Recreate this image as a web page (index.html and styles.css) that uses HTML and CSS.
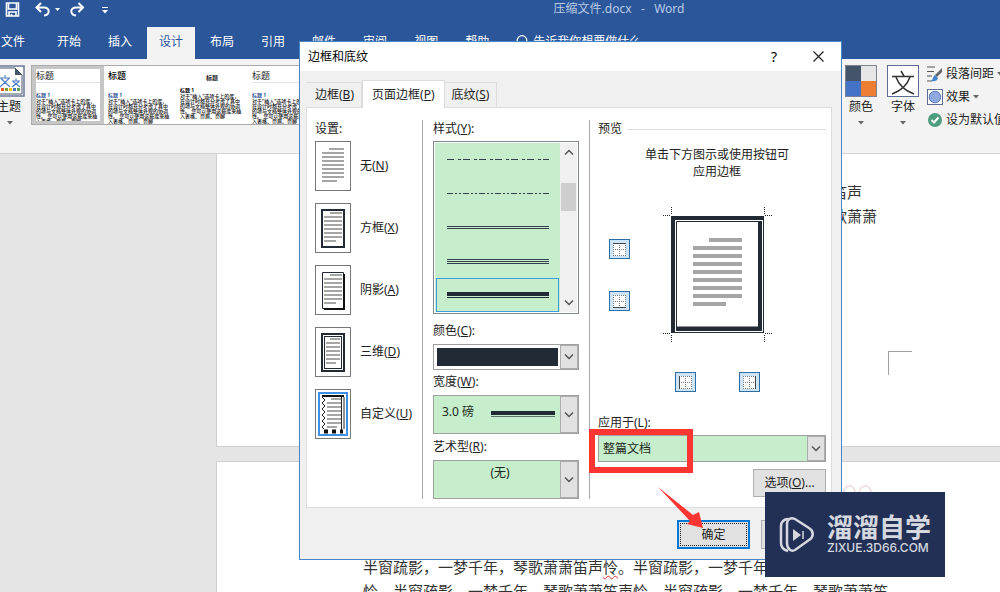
FILE: index.html
```html
<!DOCTYPE html>
<html lang="zh-CN">
<head>
<meta charset="utf-8">
<title>压缩文件.docx - Word</title>
<link rel="stylesheet" href="styles.css">
</head>
<body>
<svg class="defs" aria-hidden="true">
  <defs>
    <symbol id="chev" viewBox="0 0 10 8"><path d="M1 1.5L5 5.5L9 1.5" fill="none" stroke="#555" stroke-width="1.5"/></symbol>
    <symbol id="tri" viewBox="0 0 6 4"><path d="M0 0H6L3 3.5Z" fill="currentColor"/></symbol>
    <symbol id="grid" viewBox="0 0 13 13">
      <rect width="13" height="13" fill="#fff"/>
      <path d="M.5 0V13M6.500 0V13M12.500 0V13M0 .5H13M0 6.500H13M0 12.500H13" fill="none" stroke="#777" stroke-dasharray="1 1"/>
    </symbol>
    <symbol id="lines" viewBox="0 0 22 36">
      <path d="M7 1H22M0 5H22M0 9H22M0 13H22M0 17H22M0 21H22M0 25H22M0 29H22M0 33H15" stroke="#a6a6a6" stroke-width="2"/>
    </symbol>
  </defs>
</svg>
<div class="app">
  <header class="titlebar">
    <div class="quick">
      <button aria-label="保存"><svg width="15" height="15" viewBox="0 0 15 15"><path d="M1.500 1H13.500V14H1.500ZM3.500 1V7H11.500V1M4 14V10H11V14M6.500 14V12" fill="none" stroke="#fff" stroke-width="1.600"/></svg></button>
      <button aria-label="撤消"><svg width="26" height="15" viewBox="0 0 26 15"><path d="M6 1L1.500 5.500L6 10M2 5.500H9C15.500 5.500 15 13 9 13.500" fill="none" stroke="#fff" stroke-width="2"/><path d="M20 6H25L22.500 9Z" fill="#fff"/></svg></button>
      <button aria-label="恢复"><svg width="16" height="15" viewBox="0 0 16 15"><path d="M9.500 1L14 5.500L9.500 10M14 5.500H7C.5 5.500 1 13 7 13.500" fill="none" stroke="#fff" stroke-width="2"/></svg></button>
      <button class="more" aria-label="自定义快速访问工具栏"><svg width="6" height="7" viewBox="0 0 6 7"><path d="M0 .5H6" stroke="#fff"/><path d="M0 3H6L3 6.500Z" fill="#fff"/></svg></button>
    </div>
    <h1 class="doc-title">压缩文件.docx&nbsp;&nbsp; - &nbsp;&nbsp;Word</h1>
  </header>
  <nav class="tabs">
    <button class="tab file">文件</button>
    <button class="tab">开始</button>
    <button class="tab">插入</button>
    <button class="tab current">设计</button>
    <button class="tab">布局</button>
    <button class="tab">引用</button>
    <button class="tab">邮件</button>
    <button class="tab">审阅</button>
    <button class="tab">视图</button>
    <button class="tab">帮助</button>
    <button class="tab tell"><svg width="12" height="15" viewBox="0 0 12 15"><circle cx="6" cy="5.500" r="4.800" fill="none" stroke="#fff" stroke-width="1.300"/><path d="M4 11.500H8M4.500 14H7.500" stroke="#fff"/></svg>告诉我你想要做什么</button>
  </nav>
  <section class="ribbon">
    <button class="theme">
      <svg width="30" height="32" viewBox="0 0 30 32"><path d="M0 1H29V31H0" fill="#fff" stroke="#6b7a99" stroke-width="1.500"/><path d="M2 3H20L27 10V29H2" fill="#fff" stroke="#44546a"/><path d="M20 3V10H27Z" fill="#44546a"/><path d="M5 13H15M10 10V13M6 13.500L15 22M14 13.500L5 22M17 16H25M21 13.500V16M18 16.500L25 22M24 16.500L17 22" fill="none" stroke="#4a7cc4" stroke-width="1.100"/><path d="M6 24.500H9" stroke="#e05a2a" stroke-width="3"/><path d="M10 24.500H13" stroke="#7a9c3a" stroke-width="3"/><path d="M14 24.500H17" stroke="#f3c300" stroke-width="3"/><path d="M18 24.500H21" stroke="#4472c4" stroke-width="3"/><path d="M22 24.500H25" stroke="#5fa049" stroke-width="3"/></svg>
      <span>主题</span>
      <svg class="tri" width="6" height="4"><use href="#tri"/></svg>
    </button>
    <div class="gallery">
      <button class="style chosen"><b class="big rule">标题</b><b class="sub">标题 1</b><span class="tiny">对于"插入"选项卡上的库，在设计时都充分考虑了其中的项与文档整体外观的协调性。 您可以使用这些库来插入表格、页眉、页脚</span></button>
      <button class="style"><b class="big dark">标题</b><b class="sub">标题 1</b><span class="tiny">对于"插入"选项卡上的库，在设计时都充分考虑了其中的项与文档整体外观的协调性。 您可以使用这些库来插入表格、页眉、页脚</span></button>
      <button class="style"><b class="big small">标题</b><b class="sub black">标题 1</b><span class="tiny">对于"插入"选项卡上的库，在设计时都充分考虑了其中的项与文档整体外观的协调性。 您可以使用这些库来插入表格、页眉、页脚</span></button>
      <button class="style"><b class="big rule">标题</b><b class="sub">标题 1</b><span class="tiny">对于"插入"选项卡上的库，在设计时都充分考虑了其中的项与文档整体外观的协调性。 您可以使用这些库来插入表格、页眉、页脚</span></button>
    </div>
    <div class="format">
      <button class="large"><svg width="32" height="32" viewBox="0 0 32 32"><path d="M0 0H16V16H0Z" fill="#44546a"/><path d="M16 0H32V16H16Z" fill="#e7e6e6"/><path d="M0 16H16V32H0Z" fill="#4472c4"/><path d="M16 16H32V32H16Z" fill="#ed7d31"/><path d="M.5 .5H31.500V31.500H.5Z" fill="none" stroke="#7c8290"/></svg><span>颜色</span><svg class="tri" width="6" height="4"><use href="#tri"/></svg></button>
      <button class="large"><svg width="32" height="32" viewBox="0 0 32 32"><rect x=".5" y=".5" width="31" height="31" fill="#fff" stroke="#5b6d92"/><path d="M5 11.500H27M14 6L17 11M23 12C20 21 13 26 5 29M9 12C12 21 19 26 27 29" fill="none" stroke="#333" stroke-width="1.500"/></svg><span>字体</span><svg class="tri" width="6" height="4"><use href="#tri"/></svg></button>
      <div class="stack">
        <button><svg width="16" height="16" viewBox="0 0 16 16"><path d="M0 1H8M0 5.500H7M0 10H5M0 15H5" stroke="#555"/><path d="M15 2V6L10 11L8 9Z" fill="#666"/><path d="M8 9L11 12C10 15 8 15.500 4 15C6 14 6 10 8 9Z" fill="#3f84cc"/></svg>段落间距<svg class="tri" width="6" height="4"><use href="#tri"/></svg></button>
        <button><svg width="16" height="16" viewBox="0 0 16 16"><rect x=".5" y=".5" width="15" height="15" fill="#fff" stroke="#5b6d92"/><circle cx="8" cy="8" r="5.800" fill="#8ea9e0" stroke="#5b7cc4"/></svg>效果<svg class="tri" width="6" height="4"><use href="#tri"/></svg></button>
        <button><svg width="16" height="16" viewBox="0 0 16 16"><circle cx="8" cy="8" r="7" fill="#4d9d7f"/><path d="M4.500 8L7 10.500L11.500 5.500" fill="none" stroke="#fff" stroke-width="2"/></svg>设为默认值</button>
      </div>
    </div>
  </section>
  <main class="canvas">
    <article class="page first">
      <p class="indent">笛声</p>
      <p>歌萧萧</p>
      <div class="crop"></div>
    </article>
    <article class="page second">
      <p>半窗疏影，一梦千年，琴歌萧萧笛声<span class="typo">怜</span>。半窗疏影，一梦千年，</p>
      <p>怜。半窗疏影，一梦千年，琴歌萧萧笛声怜。半窗疏影，一梦千年，琴歌萧萧笛</p>
    </article>
  </main>
</div>

<div class="dialog" role="dialog" aria-labelledby="dlg-title">
  <header class="dlg-head">
    <h2 id="dlg-title">边框和底纹</h2>
    <button class="help" aria-label="帮助">?</button>
    <button aria-label="关闭"><svg width="11" height="11" viewBox="0 0 11 11"><path d="M.5 .5L10.500 10.500M10.500 .5L.5 10.500" stroke="#222" stroke-width="1.200"/></svg></button>
  </header>
  <div class="dlg-tabs">
    <button>边框(<u>B</u>)</button>
    <button class="active">页面边框(<u>P</u>)</button>
    <button>底纹(<u>S</u>)</button>
  </div>
  <div class="panel">
    <section class="settings">
      <h3>设置:</h3>
      <button><svg width="36" height="50" viewBox="0 0 36 50"><rect x=".5" y=".5" width="35" height="49" fill="#fff" stroke="#777"/><use href="#lines" x="7" y="7" width="22" height="36"/></svg><span>无(<u>N</u>)</span></button>
      <button><svg width="36" height="50" viewBox="0 0 36 50"><rect x=".5" y=".5" width="35" height="49" fill="#fff" stroke="#777"/><rect x="7" y="7" width="22" height="37" fill="none" stroke="#222a35" stroke-width="2"/><path d="M15 10H27M9 14H27M9 18H27M9 22H27M9 26H27M9 30H27M9 34H27M9 38H21" stroke="#a6a6a6" stroke-width="2"/></svg><span>方框(<u>X</u>)</span></button>
      <button><svg width="36" height="50" viewBox="0 0 36 50"><rect x=".5" y=".5" width="35" height="49" fill="#fff" stroke="#777"/><path d="M7.500 7.500H28.500V43.500H7.500Z" fill="none" stroke="#222a35"/><path d="M29 9V44H9" fill="none" stroke="#111" stroke-width="2"/><path d="M15 10H27M9 14H27M9 18H27M9 22H27M9 26H27M9 30H27M9 34H27M9 38H21" stroke="#a6a6a6" stroke-width="2"/></svg><span>阴影(<u>A</u>)</span></button>
      <button><svg width="36" height="50" viewBox="0 0 36 50"><rect x=".5" y=".5" width="35" height="49" fill="#fff" stroke="#777"/><rect x="7" y="7" width="22" height="37" fill="none" stroke="#222a35" stroke-width="2"/><rect x="9.500" y="9.500" width="17" height="32" fill="none" stroke="#222a35"/><path d="M15 12H25M11 16H25M11 20H25M11 24H25M11 28H25M11 32H25M11 36H21" stroke="#a6a6a6" stroke-width="2"/></svg><span>三维(<u>D</u>)</span></button>
      <button aria-pressed="true"><svg width="36" height="50" viewBox="0 0 36 50"><rect x=".5" y=".5" width="35" height="49" fill="#fff" stroke="#777"/><rect x="4" y="4" width="28" height="42" fill="none" stroke="#3f8fe6" stroke-width="2"/><path d="M7 7H29" stroke="#111" stroke-width="2"/><path d="M26.500 8V41M29 8V40" stroke="#222" /><path d="M7 8L10 11L7 14L10 17L7 20L10 23L7 26L10 29L7 32L10 35L7 38L9 40" fill="none" stroke="#222"/><path d="M9 42.500H13M17 42.500H21M25 42.500H28" stroke="#111" stroke-width="4"/><path d="M16 10H26M12 14H26M12 18H26M12 22H26M12 26H26M12 30H26M12 34H26M12 38H22" stroke="#a6a6a6" stroke-width="2"/></svg><span>自定义(<u>U</u>)</span></button>
    </section>
    <section class="line">
      <h3>样式(<u>Y</u>):</h3>
      <div class="list">
        <div class="options" role="listbox" aria-label="样式">
          <div role="option"><svg width="102" height="7"><path d="M0 3.500H102" stroke="#333f4c" stroke-dasharray="7 4 3 2"/></svg></div>
          <div role="option"><svg width="102" height="7"><path d="M0 3.500H102" stroke="#333f4c" stroke-dasharray="6 2 2 2 2 2"/></svg></div>
          <div role="option"><svg width="102" height="7"><path d="M0 2.500H102M0 4.500H102" stroke="#333f4c"/></svg></div>
          <div role="option"><svg width="102" height="7"><path d="M0 1.500H102M0 3.500H102M0 5.500H102" stroke="#333f4c"/></svg></div>
          <div role="option" aria-selected="true"><svg width="102" height="7"><path d="M0 2H102" stroke="#222a35" stroke-width="4"/><path d="M0 5.500H102" stroke="#222a35"/></svg></div>
        </div>
        <div class="scroll">
          <button aria-label="向上"><svg class="up" width="10" height="8"><use href="#chev"/></svg></button>
          <div class="thumb"></div>
          <button aria-label="向下"><svg width="10" height="8"><use href="#chev"/></svg></button>
        </div>
      </div>
      <label for="color">颜色(<u>C</u>):</label>
      <div class="combo white"><select id="color" aria-label="颜色"><option></option></select><div class="swatch"></div><span class="arrow"><svg width="10" height="8"><use href="#chev"/></svg></span></div>
      <label for="width">宽度(<u>W</u>):</label>
      <div class="combo tall"><select id="width"><option>3.0 磅</option></select><svg class="sample" width="64" height="7"><path d="M0 2H64" stroke="#222a35" stroke-width="4"/><path d="M0 5.500H64" stroke="#5c7465"/></svg><span class="arrow"><svg width="10" height="8"><use href="#chev"/></svg></span></div>
      <label for="art">艺术型(<u>R</u>):</label>
      <div class="combo tall art"><select id="art"><option>(无)</option></select><span class="arrow"><svg width="10" height="8"><use href="#chev"/></svg></span></div>
    </section>
    <section class="preview">
      <h3 class="legend">预览</h3>
      <p>单击下方图示或使用按钮可<br>应用边框</p>
      <div class="stage">
        <div class="side">
          <button aria-label="上边框"><svg width="13" height="13" viewBox="0 0 13 13"><use href="#grid"/><path d="M0 .5H13" stroke="#444"/></svg></button>
          <button aria-label="下边框"><svg width="13" height="13" viewBox="0 0 13 13"><use href="#grid"/><path d="M0 12.500H13" stroke="#444"/></svg></button>
        </div>
        <svg width="110" height="136" viewBox="0 0 110 136">
          <path d="M0 8.500H8M8.500 0V8M102 8.500H110M101.500 0V8M0 126.500H8M8.500 128V136M102 126.500H110M101.500 128V136" stroke="#222" stroke-dasharray="1 1"/>
          <path d="M8 9H101V126H8Z" fill="#222a35"/>
          <path d="M12 13H100V125H12Z" fill="#fff"/>
          <path d="M13.500 14.500H98.500V123.500H13.500Z" fill="#fff" stroke="#222a35"/>
          <path d="M97 14V122M13 121.500H99" stroke="#222a35" stroke-width="4" fill="none"/>
          <path d="M46 33H79M30 41H79M30 49H79M30 57H79M30 65H79M30 73H79M30 81H79M30 89H79M30 97H63" stroke="#a6a6a6" stroke-width="4"/>
        </svg>
      </div>
      <div class="below">
        <button aria-label="左边框"><svg width="13" height="13" viewBox="0 0 13 13"><use href="#grid"/><path d="M.5 0V13" stroke="#444"/></svg></button>
        <button aria-label="右边框"><svg width="13" height="13" viewBox="0 0 13 13"><use href="#grid"/><path d="M12.500 0V13" stroke="#444"/></svg></button>
      </div>
      <label for="apply">应用于(L):</label>
      <div class="combo apply"><select id="apply"><option>整篇文档</option></select><span class="arrow"><svg width="10" height="8"><use href="#chev"/></svg></span></div>
      <button class="push more-options">选项(<u>O</u>)...</button>
    </section>
  </div>
  <footer class="dlg-foot">
    <button class="push ok"><span>确定</span></button>
    <button class="push" aria-label="取消"></button>
  </footer>
  <div class="highlight"></div>
  <svg class="pointer" width="46" height="42" viewBox="0 0 46 42"><path d="M0 0L35 28L41 25L45 41L29 37L32 34Z" fill="#fb3532"/></svg>
</div>

<svg class="rings" width="32" height="14" viewBox="0 0 32 14"><path d="M2 14C0 -1 12 -1 13 8M17 14C16 -1 28 -1 29 8" fill="none" stroke="#f0e2e4" stroke-width="2"/></svg>
<aside class="brand">
  <svg width="36" height="38" viewBox="0 0 36 38"><path d="M9 3C5 3 2 6 2 10V27C2 31 5 34 9 35" fill="none" stroke="#d5d8df" stroke-width="2.500"/><path d="M8 27V8C8 3 12 1 16 3L30 12C35 15 35 21 30 24L16 34C12 36 8 33 8 27Z" fill="none" stroke="#d5d8df" stroke-width="2.500"/><path d="M14 13V25L22 19Z" fill="#d5d8df"/><path d="M24 15V23" stroke="#d5d8df" stroke-width="1.500"/></svg>
  <div><strong>溜溜自学</strong><span>ZIXUE.3D66.COM</span></div>
</aside>
</body>
</html>
```
FILE: styles.css
```css
* { box-sizing: border-box; }
body, h1, h2, h3, p { margin: 0; }
body {
  height: 100vh;
  overflow: hidden;
  font: 12px/18px "Noto Sans", "Noto Sans CJK SC", sans-serif;
  color: #222;
}
h1, h2, h3 { font: inherit; }
button, select { font: inherit; color: inherit; border: 0; padding: 0; margin: 0; background: none; border-radius: 0; }
button { white-space: nowrap; }
svg { display: block; flex: none; }
.defs { position: absolute; width: 0; height: 0; }

.app { display: flex; flex-direction: column; height: 100vh; overflow: hidden; background: #e5e5e5; }
.titlebar { display: flex; flex: none; height: 27px; background: #2b579a; }
.quick { display: flex; align-items: flex-start; gap: 12px; padding: 2px 0 0 5px; }
.quick button { display: flex; }
.quick .more { padding: 5px 0 0 5px; }
.quick button:first-child { margin-right: 3px; }
.quick button:nth-child(2) { margin-right: -4px; }
.doc-title { flex: 1; color: #b9cbe6; text-align: center; padding-left: 130px; }

.tabs { display: flex; flex: none; gap: 3px; height: 32px; background: #2b579a; }
.tab { padding: 0 12px 2px; color: #fff; }
.tab.file { padding: 0 17px 2px 1px; }
.tab.current { background: #f3f3f3; color: #2b579a; }
.tab.tell { display: flex; align-items: center; gap: 5px; }

.ribbon { display: flex; flex: none; height: 95px; padding-top: 6px; background: #f3f3f3; border-bottom: 1px solid #d2d2d2; overflow: hidden; }
.theme { display: flex; flex-direction: column; align-items: flex-end; width: 25px; margin-right: 6px; overflow: hidden; align-self: flex-start; }
.theme span { padding: 1px 4px 0 0; }
.theme .tri { margin: 5px 12px 0 0; }
.tri { color: #666; }
.gallery { display: flex; flex: 1; min-width: 0; height: 60px; background: #fff; border: 1px solid #ababab; overflow: hidden; }
.style { display: flex; flex-direction: column; flex: none; width: 72px; height: 58px; padding: 3px 4px 2px; border: 0 solid #c6c6c6; text-align: left; overflow: hidden; }
.style.chosen { padding: 0; border-width: 3px 4px; }
.big { width: 100%; height: 14px; font-size: 9px; line-height: 14px; font-weight: 400; }
.style .rule { border-bottom: 1px solid #dce3ee; }
.big.dark { font-weight: 500; color: #000; }
.big.small { height: 16px; font-size: 6px; line-height: 18px; font-weight: 700; text-align: center; }
.sub { padding-top: 8px; font-size: 5px; line-height: 8px; color: #2f5496; }
.sub.black { padding-top: 1px; color: #000; }
.tiny { font-size: 5px; line-height: 5px; font-weight: 500; color: #111; white-space: normal; }

.format { display: flex; gap: 10px; flex: 0 0 159px; padding-left: 4px; overflow: hidden; }
.large { display: flex; flex-direction: column; align-items: center; width: 32px; align-self: flex-start; }
.large span { padding-top: 1px; }
.large .tri { margin-top: 5px; }
.stack { display: flex; flex-direction: column; margin: -3px 0 0 -2px; }
.stack button { display: flex; align-items: center; gap: 3px; height: 23px; }

.canvas { display: flex; flex-direction: column; flex: 1; gap: 14px; min-height: 0; padding-left: 216px; font-size: 15px; line-height: 24px; color: #333; }
.page { background: #fff; border: 1px solid #cfcfcf; border-right: 0; overflow: hidden; white-space: nowrap; }
.first { display: flex; flex-direction: column; align-items: flex-end; flex: 0 0 293px; border-top: 0; padding: 26px 123px 0 0; }
.first .indent { padding-right: 15px; }
.second { flex: 1; border-bottom: 0; padding: 93px 0 0 146px; }
.typo { text-decoration: underline wavy #e03030 1px; text-underline-offset: 2px; }
.crop { width: 24px; height: 24px; margin: 123px -35px 0 0; border: solid #a0a0a0; border-width: 1px 0 0 1px; }

.dialog { position: absolute; left: 299px; top: 41px; width: 543px; display: flex; flex-direction: column; background: #f0f0f0; border: 1px solid #4a86c5; }
.dlg-head { display: flex; align-items: center; height: 29px; padding: 0 17px 0 8px; background: #fff; color: #000; }
.dlg-head h2 { flex: 1; }
.dlg-head .help { margin-right: 36px; font-size: 14px; }
.dlg-tabs { display: flex; align-items: flex-end; height: 37px; padding: 0 7px; margin-bottom: -1px; }
.dlg-tabs button { height: 26px; padding: 0 7px 0 8px; border: 1px solid #dcdcdc; border-width: 1px 1px 1px 0; }
.dlg-tabs .active { height: 28px; padding: 0 9px; background: #fff; border-width: 1px 1px 0; position: relative; }
.dlg-tabs button:last-child { padding: 0 7px; }
.panel { display: flex; margin: 0 9px 0 6px; padding: 12px 5px 8px 8px; background: #fff; border: 1px solid #dcdcdc; }

.settings { display: flex; flex-direction: column; align-items: flex-start; gap: 12px; width: 108px; border-right: 1px solid #a8a8a8; }
.settings h3 { margin-bottom: -9px; }
.settings button { display: flex; align-items: center; gap: 9px; }
.line { display: flex; flex-direction: column; gap: 4px; width: 167px; padding: 0 10px; border-right: 1px solid #a8a8a8; }
.line h3 { margin-bottom: -1px; }
.list { display: flex; height: 173px; padding: 1px; margin-bottom: 4px; border: 1px solid #828790; }
.options { display: grid; grid-template-rows: repeat(5, 1fr); flex: 1; background: #c6edcc; }
.options div { display: grid; place-items: center; margin: 0 1px; }
.options [aria-selected] { border: 1px solid #3f9be0; }
.scroll { display: flex; flex-direction: column; align-items: center; width: 17px; background: #f0f0f0; }
.scroll button { height: 18px; }
.up { transform: rotate(180deg); }
.thumb { width: 15px; height: 28px; margin: 22px 0 auto; background: #cdcdcd; }

.combo { display: grid; grid-template-columns: 1fr 18px; align-items: center; height: 26px; background: #c6edcc; border: 1px solid #a0a0a0; }
.combo > * { grid-row: 1; }
.combo select { grid-column: 1 / 3; width: 100%; height: 100%; appearance: none; padding: 0 20px 6px 8px; color: #1c2a20; }
.combo .arrow { grid-column: 2; height: 100%; display: grid; place-items: center; background: #e1e1e1; border: 1px solid #adadad; pointer-events: none; }
.white { background: #fff; margin-bottom: -1px; }
.swatch { grid-column: 1; height: 18px; margin: 0 2px 0 3px; background: #222a35; pointer-events: none; }
.tall { height: 39px; }
.sample { grid-column: 1; justify-self: end; margin-right: 5px; pointer-events: none; }
.art select { text-align: center; text-align-last: center; padding: 0 12px 14px 0; }

.preview { display: flex; flex-direction: column; flex: 1; padding-left: 8px; }
.legend { display: flex; align-items: center; gap: 6px; }
.legend::after { content: ""; flex: 1; height: 1px; background: #dcdcdc; }
.preview p { margin: 8px 0 27px; padding-left: 10px; line-height: 17px; text-align: center; }
.stage { display: flex; gap: 33px; padding-left: 11px; }
.side { display: flex; flex-direction: column; gap: 32px; padding-top: 32px; }
.side button, .below button { display: grid; place-items: center; width: 21px; height: 20px; background: #cce4f7; border: 1px solid #2e6da4; }
.below { display: flex; gap: 43px; padding: 29px 0 22px 77px; }
.apply { height: 27px; margin-top: 3px; }
.apply select { padding: 0 20px 0 4px; }
.push { width: 73px; height: 29px; background: #e1e1e1; border: 1px solid #adadad; }
.more-options { align-self: flex-end; margin-top: 7px; height: 28px; }
.dlg-foot { display: flex; justify-content: flex-end; gap: 11px; padding: 12px 7px 10px; }
.ok { padding: 1px; border: 2px solid #0078d7; }
.ok span { display: grid; place-items: center; height: 100%; border: 1px dotted #222; }

.highlight { position: absolute; left: 289px; top: 387px; width: 104px; height: 44px; border: 6px solid #fb3532; }
.pointer { position: absolute; left: 358px; top: 445px; }

.rings { position: absolute; left: 842px; top: 484px; }
.brand { position: absolute; left: 765px; top: 492px; display: flex; align-items: center; gap: 12px; width: 180px; height: 85px; padding-left: 14px; background: #223056; color: #d5d8df; }
.brand div { display: flex; flex-direction: column; }
.brand strong { font-size: 26px; line-height: 27px; font-weight: 700; }
.brand span { font: 500 12px/14px Inter, sans-serif; }
```
